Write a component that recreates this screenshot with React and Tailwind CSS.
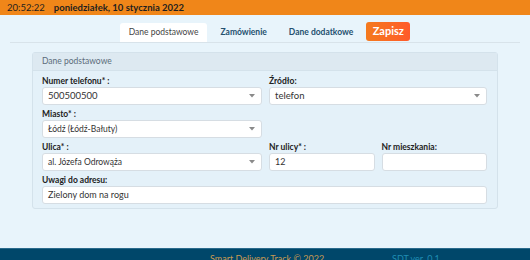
import React from "react";

function Caret() {
  return (
    <svg width="6" height="4" viewBox="0 0 6 4" className="shrink-0">
      <path d="M0 0 L6 0 L3 3.5 Z" fill="#8a8a8a" />
    </svg>
  );
}

function Label({ children }) {
  return (
    <div className="h-[12px] leading-[12px] text-[8.5px] font-bold text-[#222] whitespace-nowrap">
      {children}
    </div>
  );
}

function Select({ value, small }) {
  return (
    <div className="h-[18px] bg-white border border-[#d6dde3] rounded-[3px] flex items-center justify-between pl-[5px] pr-[6px]">
      <span className={small ? "text-[8.5px] text-[#333]" : "text-[9.5px] text-[#333]"}>{value}</span>
      <Caret />
    </div>
  );
}

function Input({ value }) {
  return (
    <div className="h-[18px] bg-white border border-[#d6dde3] rounded-[3px] flex items-center pl-[5px]">
      <span className="text-[9px] text-[#333]">{value}</span>
    </div>
  );
}

export default function App() {
  return (
    <div className="w-[530px] bg-[#e8f4fb] font-['Lato','Open_Sans',sans-serif]">
      <div className="h-[248px] flex flex-col">
        <div className="h-[15px] bg-[#f08619] flex items-center pl-[7px] text-[9.5px] text-[#1f1f1f] leading-none">
          <span>20:52:22</span>
          <span className="ml-[9px] font-bold">poniedziałek, 10 stycznia 2022</span>
        </div>
        <div className="mx-[10px] mt-[7px] border-b border-[#d8e3ea] flex justify-center items-end gap-[4px]">
          <div className="h-[19px] px-[9px] bg-white rounded-t-[3px] flex items-center text-[8.5px] text-[#444]">Dane podstawowe</div>
          <div className="h-[19px] px-[9px] flex items-center text-[8.5px] font-bold text-[#24506f]">Zamówienie</div>
          <div className="h-[19px] px-[9px] flex items-center text-[8.5px] font-bold text-[#24506f]">Dane dodatkowe</div>
          <div className="h-[19px] w-[44px] rounded-[3px] bg-gradient-to-r from-[#f47a1e] to-[#ff5a2a] flex items-center justify-center text-[11px] font-bold text-white mb-[1px]">Zapisz</div>
        </div>
        <div className="mx-[32px] mt-[9px] bg-[#e4f1f9] border border-[#d4e2eb] rounded-[3px]">
          <div className="h-[18px] bg-[#dde9f1] border-b border-[#d4e2eb] flex items-center pl-[9px] text-[8.5px] text-[#5b6c7a]">Dane podstawowe</div>
          <div className="pl-[9px] pr-[10px] pt-[4px] pb-[4px] flex flex-col gap-[3px]">
            <div className="grid grid-cols-[220px_1fr] gap-x-[7px]">
              <div>
                <Label>Numer telefonu* :</Label>
                <Select value="500500500" />
              </div>
              <div>
                <Label>Źródło:</Label>
                <Select value="telefon" />
              </div>
            </div>
            <div className="grid grid-cols-[220px_1fr] gap-x-[7px]">
              <div>
                <Label>Miasto* :</Label>
                <Select value="Łódź (Łódź-Bałuty)" small />
              </div>
              <div />
            </div>
            <div className="grid grid-cols-[220px_1fr] gap-x-[7px]">
              <div>
                <Label>Ulica* :</Label>
                <Select value="al. Józefa Odrowąża" small />
              </div>
              <div className="grid grid-cols-2 gap-x-[7px]">
                <div>
                  <Label>Nr ulicy* :</Label>
                  <Input value="12" />
                </div>
                <div>
                  <Label>Nr mieszkania:</Label>
                  <Input value="" />
                </div>
              </div>
            </div>
            <div>
              <Label>Uwagi do adresu:</Label>
              <Input value="Zielony dom na rogu" />
            </div>
          </div>
        </div>
      </div>
      <div className="h-[30px] bg-[#00476a] border-t border-[#2a6a8c] flex pl-[210px] pt-[4px] text-[9px] leading-[12px]">
        <span className="w-[182px] text-[#c89a52]">Smart Delivery Track © 2022</span>
        <span className="text-[#1f8db3]">SDT ver. 0.1</span>
      </div>
    </div>
  );
}
